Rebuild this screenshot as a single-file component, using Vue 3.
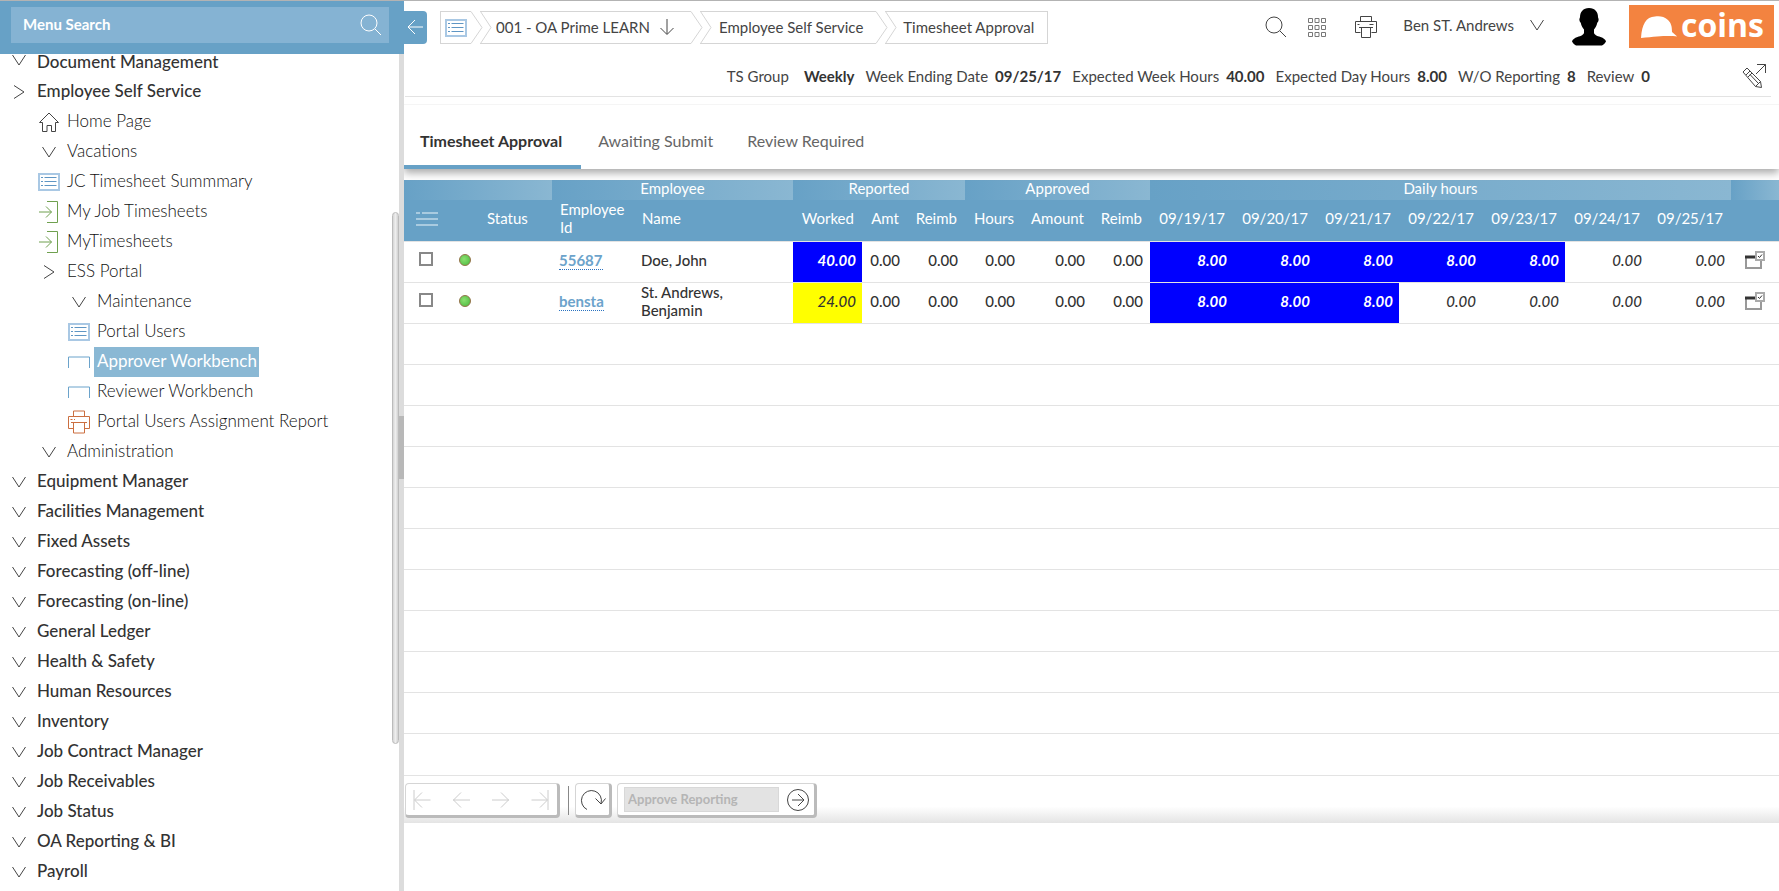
<script setup>
const menu = [
  { label: 'Document Management', level: 0, icon: 'down' },
  { label: 'Employee Self Service', level: 0, icon: 'right' },
  { label: 'Home Page', level: 1, icon: 'home' },
  { label: 'Vacations', level: 1, icon: 'down' },
  { label: 'JC Timesheet Summmary', level: 1, icon: 'list' },
  { label: 'My Job Timesheets', level: 1, icon: 'enter' },
  { label: 'MyTimesheets', level: 1, icon: 'enter' },
  { label: 'ESS Portal', level: 1, icon: 'right' },
  { label: 'Maintenance', level: 2, icon: 'down' },
  { label: 'Portal Users', level: 2, icon: 'list' },
  { label: 'Approver Workbench', level: 2, icon: 'bench', active: true },
  { label: 'Reviewer Workbench', level: 2, icon: 'bench' },
  { label: 'Portal Users Assignment Report', level: 2, icon: 'report' },
  { label: 'Administration', level: 1, icon: 'down' },
  { label: 'Equipment Manager', level: 0, icon: 'down' },
  { label: 'Facilities Management', level: 0, icon: 'down' },
  { label: 'Fixed Assets', level: 0, icon: 'down' },
  { label: 'Forecasting (off-line)', level: 0, icon: 'down' },
  { label: 'Forecasting (on-line)', level: 0, icon: 'down' },
  { label: 'General Ledger', level: 0, icon: 'down' },
  { label: 'Health & Safety', level: 0, icon: 'down' },
  { label: 'Human Resources', level: 0, icon: 'down' },
  { label: 'Inventory', level: 0, icon: 'down' },
  { label: 'Job Contract Manager', level: 0, icon: 'down' },
  { label: 'Job Receivables', level: 0, icon: 'down' },
  { label: 'Job Status', level: 0, icon: 'down' },
  { label: 'OA Reporting & BI', level: 0, icon: 'down' },
  { label: 'Payroll', level: 0, icon: 'down' },
]
const info = [
  ['TS Group', 'Weekly'],
  ['Week Ending Date', '09/25/17'],
  ['Expected Week Hours', '40.00'],
  ['Expected Day Hours', '8.00'],
  ['W/O Reporting', '8'],
  ['Review', '0'],
]
const tabs = ['Timesheet Approval', 'Awaiting Submit', 'Review Required']
const totals = ['Amt', 'Reimb', 'Hours', 'Amount', 'Reimb']
const days = ['09/19/17', '09/20/17', '09/21/17', '09/22/17', '09/23/17', '09/24/17', '09/25/17']
const rows = [
  { id: '55687', name: 'Doe, John', worked: '40.00', tone: 'full', hours: ['8.00', '8.00', '8.00', '8.00', '8.00', '0.00', '0.00'] },
  { id: 'bensta', name: 'St. Andrews, Benjamin', worked: '24.00', tone: 'part', hours: ['8.00', '8.00', '8.00', '0.00', '0.00', '0.00', '0.00'] },
]
</script>

<template>
  <div class="page">
    <aside class="sidebar">
      <div class="search-bar">
        <div class="search-box">
          <input type="text" placeholder="Menu Search" aria-label="Menu Search" />
          <button type="button" aria-label="Search menu">
            <svg width="22" height="22" viewBox="0 0 22 22"><circle cx="9" cy="9" r="8" /><path d="M15 15l6 6" /></svg>
          </button>
        </div>
      </div>
      <div class="menu-wrap">
        <nav class="menu">
          <a v-for="m in menu" :key="m.label" href="#" :class="['item', 'level-' + m.level, { active: m.active }]">
            <span class="item-icon">
              <svg v-if="m.icon === 'down'" width="14" height="12" viewBox="0 0 14 12"><path d="M0.5 1L7 11L13.5 1" /></svg>
              <svg v-else-if="m.icon === 'right'" width="12" height="14" viewBox="0 0 12 14"><path d="M1 0.5L11 7L1 13.5" /></svg>
              <svg v-else-if="m.icon === 'home'" width="20" height="20" viewBox="0 0 20 20"><path d="M0.5 10.5L10 1l9.5 9.5h-3v9h-4v-6h-4.500v6h-4.500v-9z" /></svg>
              <svg v-else-if="m.icon === 'list'" class="list" width="22" height="18" viewBox="0 0 22 18"><path class="frame" d="M1 1h20v16H1z" /><path d="M3 4.500h2m1.500 0h12M3 8.500h2m1.500 0h12M3 12.500h2m1.500 0h12" /></svg>
              <svg v-else-if="m.icon === 'enter'" class="enter" width="20" height="22" viewBox="0 0 20 22"><path d="M8 0.500h10.500v21H8M0 11h12.500M7 5.500l5.500 5.500l-5.500 5.500" /></svg>
              <svg v-else-if="m.icon === 'bench'" class="bench" width="22" height="12" viewBox="0 0 22 12"><path d="M0.500 12V1h21v11" /></svg>
              <svg v-else class="report" width="24" height="24" viewBox="0 0 24 24"><path d="M6.500 6V1h11v5M6 18.500H1.500v-12h21v12H18M6.500 12.500h11v10.500h-11zM4 12.500h16M3.500 9.500h2m1.500 0h1" /></svg>
            </span>
            <span class="item-label">{{ m.label }}</span>
          </a>
        </nav>
        <div class="scroll"><div class="thumb"></div></div>
        <div class="splitter"><div class="grip"></div></div>
      </div>
    </aside>

    <main class="main">
      <header class="topbar">
        <button class="collapse" type="button" aria-label="Collapse menu">
          <svg width="16" height="16" viewBox="0 0 16 16"><path d="M16 8H1M8 1L1 8l7 7" /></svg>
        </button>
        <nav class="crumbs">
          <a href="#" class="crumb crumb-home" aria-label="Menu">
            <svg class="list" width="22" height="18" viewBox="0 0 22 18"><path class="frame" d="M1 1h20v16H1z" /><path d="M3 4.500h2m1.500 0h12M3 8.500h2m1.500 0h12M3 12.500h2m1.500 0h12" /></svg>
            <svg class="tip" width="12" height="33" viewBox="0 0 12 33"><path d="M0 0.500L11 16.500L0 32.500" /></svg>
          </a>
          <a href="#" class="crumb">
            <svg class="notch" width="12" height="33" viewBox="0 0 12 33"><path d="M0.500 0.500L11 16.500L0.500 32.500" /></svg>
            001 - OA Prime LEARN
            <svg class="arrow-down" width="14" height="16" viewBox="0 0 14 16"><path d="M7 0v15M0.500 9L7 15.500L13.500 9" /></svg>
            <svg class="tip" width="12" height="33" viewBox="0 0 12 33"><path d="M0 0.500L11 16.500L0 32.500" /></svg>
          </a>
          <a href="#" class="crumb crumb-mid">
            <svg class="notch" width="12" height="33" viewBox="0 0 12 33"><path d="M0.500 0.500L11 16.500L0.500 32.500" /></svg>
            Employee Self Service
            <svg class="tip" width="12" height="33" viewBox="0 0 12 33"><path d="M0 0.500L11 16.500L0 32.500" /></svg>
          </a>
          <a href="#" class="crumb crumb-last">
            <svg class="notch" width="12" height="33" viewBox="0 0 12 33"><path d="M0.500 0.500L11 16.500L0.500 32.500" /></svg>
            Timesheet Approval
          </a>
        </nav>
        <div class="tools">
          <button type="button" aria-label="Search">
            <svg width="22" height="22" viewBox="0 0 22 22"><circle cx="9" cy="9" r="8" /><path d="M15 15l6 6" /></svg>
          </button>
          <button type="button" class="app-menu" aria-label="Applications">
            <svg class="apps" width="20" height="22" viewBox="0 0 20 22"><path d="M1.500 2.500h4v4h-4zM8 2.500h4v4H8zM14.500 2.500h4v4h-4zM1.500 9.500h4v4h-4zM8 9.500h4v4H8zM14.500 9.500h4v4h-4zM1.500 16.500h4v4h-4zM8 16.500h4v4H8zM14.500 16.500h4v4h-4z" /></svg>
          </button>
          <button type="button" class="print" aria-label="Print">
            <svg width="22" height="22" viewBox="0 0 22 22"><path d="M5.500 5.500v-5h11v5M5.500 16.500h-5v-11h21v11h-5M6.500 11.500h9v10h-9zM4 11.500h14M2.500 8.500h2m10 0h4" /></svg>
          </button>
          <button type="button" class="user">
            Ben ST. Andrews
            <svg width="14" height="12" viewBox="0 0 14 12"><path d="M0.500 1L7 11L13.500 1" /></svg>
          </button>
          <svg class="avatar" width="34" height="38" viewBox="0 0 34 38"><path d="M17 0c6 0 9 4 9 9c0 1 1 1.500 0.500 3.500c-0.300 1.500-1 1.800-1.300 2.500c-0.500 3-2 5-3.200 6.500v3c0 2 3 3.500 6.500 4.500c3 1 5 2.500 5.500 4.500c-1 2-2.500 3-4 4H4c-1.500-1-3-2-4-4c0.500-2 2.500-3.500 5.500-4.500c3.500-1 6.500-2.500 6.500-4.500v-3c-1.200-1.500-2.700-3.500-3.200-6.500c-0.300-0.700-1-1-1.300-2.500C7 10.500 8 10 8 9c0-5 3-9 9-9z" /></svg>
          <div class="logo">
            <svg width="36" height="22" viewBox="0 0 36 22"><path d="M0 22C1 8 5 1 14 0.500C18 0 23 0 27 4C30 7 31 10 31 16C33 18 35 19 36 20.500C31 19.500 20 19.500 0 22z" /></svg>
            <span>coins</span>
          </div>
        </div>
      </header>

      <section class="info">
        <dl>
          <div v-for="[k, v] in info" :key="k"><dt>{{ k }}</dt><dd>{{ v }}</dd></div>
        </dl>
        <button type="button" aria-label="Edit">
          <svg width="25" height="26" viewBox="0 0 25 26"><path d="M15 1.500h8.500V10M23.500 1.500L14 11M1 9L5 5L18.500 18.500L19.500 24.500L13.500 23.500zM4 12L8 8M6 14L10 10M8 11.500L16 20M13.500 23.500l5-5" /></svg>
        </button>
      </section>

      <nav class="tabs">
        <button v-for="(t, i) in tabs" :key="t" type="button" :class="{ selected: i === 0 }">{{ t }}</button>
      </nav>

      <table class="grid">
        <colgroup>
          <col class="c-check" /><col class="c-dot" /><col class="c-status" /><col class="c-id" /><col />
          <col class="c-worked" /><col class="c-amt" /><col class="c-reimb" /><col class="c-hours" /><col class="c-amount" /><col class="c-reimb" />
          <col v-for="d in days" :key="d" class="c-day" /><col class="c-action" />
        </colgroup>
        <thead>
          <tr class="groups">
            <th colspan="3"></th>
            <th colspan="2">Employee</th>
            <th colspan="3">Reported</th>
            <th colspan="3">Approved</th>
            <th colspan="7">Daily hours</th>
            <th></th>
          </tr>
          <tr class="heads">
            <th class="center"><svg width="22" height="14" viewBox="0 0 22 14"><path d="M0 1h4M6 1h16M0 7h22M0 13h22" /></svg></th>
            <th></th>
            <th class="left">Status</th>
            <th class="left">Employee Id</th>
            <th class="left">Name</th>
            <th>Worked</th>
            <th v-for="(t, i) in totals" :key="i">{{ t }}</th>
            <th v-for="d in days" :key="d">{{ d }}</th>
            <th></th>
          </tr>
        </thead>
        <tbody>
          <tr v-for="r in rows" :key="r.id">
            <td class="check"><input type="checkbox" :aria-label="'Select ' + r.name" /></td>
            <td class="center"><span class="dot"></span></td>
            <td></td>
            <td class="left"><a href="#">{{ r.id }}</a></td>
            <td class="name">{{ r.name }}</td>
            <td :class="r.tone">{{ r.worked }}</td>
            <td v-for="(t, i) in totals" :key="i">0.00</td>
            <td v-for="(h, i) in r.hours" :key="'d' + i" :class="h === '8.00' ? 'full' : 'idle'">{{ h }}</td>
            <td class="center">
              <button type="button" class="open" :aria-label="'Open ' + r.name">
                <svg width="20" height="18" viewBox="0 0 20 18"><path class="win" d="M1 5v12h15V5" /><path class="bar" d="M0 6h11" /><path class="win tick-box" d="M11 1h8v8h-8z" /><path class="tick" d="M13 5l1.500 1.500L17 3.500" /></svg>
              </button>
            </td>
          </tr>
          <tr v-for="n in 11" :key="'e' + n" class="empty"><td colspan="19"></td></tr>
        </tbody>
      </table>

      <footer class="toolbar">
        <div class="group pager">
          <button type="button" disabled aria-label="First"><svg width="18" height="20" viewBox="0 0 18 20"><path d="M1 0v20M17.500 10H2M9 2.500L1.500 10L9 17.500" /></svg></button>
          <button type="button" disabled aria-label="Previous"><svg width="18" height="20" viewBox="0 0 18 20"><path d="M18 10H1M9 2.500L1.500 10L9 17.500" /></svg></button>
          <button type="button" disabled aria-label="Next"><svg width="18" height="20" viewBox="0 0 18 20"><path d="M0 10h17M9 2.500L16.500 10L9 17.500" /></svg></button>
          <button type="button" disabled aria-label="Last"><svg width="18" height="20" viewBox="0 0 18 20"><path d="M17 0v20M0.500 10H16M9 2.500L16.500 10L9 17.500" /></svg></button>
        </div>
        <span class="sep"></span>
        <div class="group refresh">
          <button type="button" aria-label="Refresh"><svg width="26" height="22" viewBox="0 0 26 22"><path d="M7 20.500A10 10 0 1 1 21 14.500M15.500 9.500l5.500 5.500l4.500-5.500" /></svg></button>
        </div>
        <div class="group action">
          <input type="text" disabled value="Approve Reporting" aria-label="Action" />
          <button type="button" aria-label="Run action"><svg width="24" height="24" viewBox="0 0 24 24"><circle cx="12" cy="12" r="10.500" /><path d="M6 12h12M12 6l6 6l-6 6" /></svg></button>
        </div>
      </footer>
    </main>
  </div>
</template>

<style>
body {
  background: #fff;
}
</style>

<style scoped>
.page {
  display: flex;
  height: 100vh;
  box-sizing: border-box;
  border-top: 1px solid #b3b3b3;
  overflow: hidden;
  font-family: Lato, "Liberation Sans", sans-serif;
  font-size: 15px;
  color: #333;
}
.page *, .page *::before { box-sizing: border-box; }
a { color: inherit; text-decoration: none; }
button, input {
  font: inherit;
  color: inherit;
  margin: 0;
  padding: 0;
  border: 0;
  background: none;
}
svg { display: block; flex: none; fill: none; stroke: #444; stroke-width: 1; }

.sidebar { display: flex; flex-direction: column; flex: none; width: 404px; }
.search-bar { flex: none; height: 53px; padding: 6px 15px 11px 11px; background: #67a1c6; }
.search-box { display: flex; align-items: center; height: 36px; padding: 0 7px 0 12px; background: #85b3d3; }
.search-box input { flex: 1; min-width: 0; height: 32px; padding-bottom: 2px; font-weight: 700; color: #fff; outline: none; }
.search-box input::placeholder { color: #fff; opacity: 1; }
.search-box svg { stroke: #fff; }

.menu-wrap { display: flex; flex: 1; min-height: 0; }
.menu { flex: 1; overflow: hidden; }
.menu .item:first-child { align-items: flex-start; height: 23px; }
.menu .item:first-child .item-label { line-height: 16px; padding-bottom: 0; }
.item { display: flex; align-items: center; height: 30px; font-size: 17px; font-weight: 300; color: #111; }
.item-icon { display: flex; flex: none; justify-content: center; width: 30px; }
.item-label { line-height: 28px; padding: 0 4px 2px 3px; }
.level-0 { padding-left: 4px; color: #333; font-weight: 500; }
.level-1 { padding-left: 34px; }
.level-2 { padding-left: 64px; }
.active .item-label { padding-right: 2px; background: #8ab8d4; color: #fff; font-weight: 400; }
.list { stroke: #5f96c4; }
.list .frame { stroke: #a9c8e4; stroke-width: 2; }
.enter { stroke: #6fa04f; }
.bench { stroke: #6ba3cb; }
.report { stroke: #cb6f40; }
.scroll { flex: none; width: 7px; padding-top: 158px; }
.thumb { height: 532px; border: 1px solid #bbb; border-radius: 4px; background: linear-gradient(to right, #d5d5d5, #eee, #d0d0d0); }
.splitter { display: flex; flex-direction: column; justify-content: center; flex: none; width: 5px; background: #dcdcdc; }
.grip { height: 63px; margin-bottom: 50px; background: #b8b8b8; }

.main { flex: 1; min-width: 0; }
.topbar { display: flex; align-items: flex-start; height: 54px; color: #444; }
.collapse { display: flex; align-items: center; justify-content: center; flex: none; width: 23px; height: 33px; margin: 10px 13px 0 0; padding: 0 2px 2px 0; border-radius: 0 4px 4px 0; background: #67a1c6; }
.collapse svg { stroke: #fff; }
.crumbs { display: flex; margin-top: 10px; }
.crumb { position: relative; display: flex; align-items: center; height: 33px; margin-right: 9px; padding: 0 0 2px 16px; border: 1px solid #d5d5d5; border-width: 1px 0; white-space: nowrap; }
.crumb-home { width: 31px; padding: 0 0 0 4px; border-left-width: 1px; }
.crumb-mid { padding-right: 13px; padding-left: 19px; }
.crumb-last { padding-left: 18px; padding-right: 13px; border-right-width: 1px; }
.tip, .notch { position: absolute; top: -1px; stroke: #d5d5d5; }
.tip { left: 100%; }
.notch { left: 0; }
.arrow-down { margin: 0 17px 0 10px; }
.tools { display: flex; align-items: center; height: 54px; margin-left: auto; padding: 0 5px 3px 0; }
.tools button { margin-right: 20px; }
.tools .app-menu { margin-right: 28px; }
.tools .print { margin-right: 26px; }
.tools .user { display: flex; align-items: center; gap: 16px; margin-right: 28px; padding-bottom: 3px; }
.apps { stroke: #777; }
.avatar { fill: #000; stroke: none; margin-right: 23px; }
.logo { display: flex; align-items: center; width: 145px; height: 43px; padding-left: 12px; gap: 4px; background: #f38340; color: #fff; }
.logo svg { fill: #fff; stroke: none; }
.logo span { padding-bottom: 3px; font: 700 32px/36px "Open Sans", sans-serif; }

.info { display: flex; align-items: center; justify-content: flex-end; height: 42px; margin: 0 8px 7px 1px; border-bottom: 1px solid #e3e3e3; }
.info dl { display: flex; gap: 11px; margin: 0 92px 0 0; line-height: 20px; }
.info div { display: flex; gap: 7px; }
.info div:first-child { gap: 15px; }
.info dt { color: #444; }
.info dd { margin: 0; font-weight: 700; }
.info button { margin-right: 4px; }

.tabs { display: flex; height: 65px; border-top: 1px solid #f5f5f5; box-shadow: 0 4px 8px #aaa; clip-path: inset(0 0 -12px 0); }
.tabs button { padding: 10px 17px 0; border-bottom: 4px solid transparent; color: #666; font-size: 16px; }
.tabs .selected { padding: 10px 19px 0 16px; border-color: #67a1c6; color: #333; font-weight: 700; }

.grid { width: 100%; margin-top: 11px; table-layout: fixed; border-collapse: collapse; }
.c-check { width: 49px; }
.c-dot { width: 26px; }
.c-status { width: 73px; }
.c-id { width: 82px; }
.c-worked { width: 69px; }
.c-amt { width: 45px; }
.c-reimb { width: 58px; }
.c-hours { width: 57px; }
.c-amount { width: 70px; }
.c-day { width: 83px; }
.c-action { width: 48px; }
th { padding: 0 8px 4px; background: #67a1c6; color: #fff; font-weight: 400; line-height: 18px; text-align: right; }
.groups th { height: 20px; padding: 0 0 4px; line-height: 16px; text-align: center; background: linear-gradient(to right, #67a1c6, #8ab7d2); }
.heads th { height: 41px; }
.heads svg { margin: 0 0 0 4px; stroke: #a9cbe0; stroke-width: 2; }
td { height: 41px; padding: 0 7px 4px; border-top: 1px solid #e3e3e3; line-height: 18px; text-align: right; font-weight: 500; }
.grid .left { text-align: left; }
.grid .center { text-align: center; padding: 0; }
.grid .name { text-align: left; padding-right: 30px; }
.grid .heads .center { padding: 0 8px 3px; }
.full { background: #00f; color: #fff; font-weight: 700; font-style: italic; }
.part { background: #ff0; font-style: italic; }
.idle { font-style: italic; }
td.full, td.part, td.idle { padding-right: 6px; }
td a { color: #6ca3cb; font-weight: 700; border-bottom: 1px dotted #2a72c0; }
.check input { appearance: none; display: block; width: 14px; height: 14px; margin: -2px 0 0 8px; border: 2px solid #888; background: #fff; }
.dot { display: block; width: 12px; height: 12px; margin: -4px 0 0 6px; border: 1px solid #96744c; border-radius: 6px; background: radial-gradient(circle at 40% 40%, #8be070, #46b83c); }
.win { stroke: #999; stroke-width: 2; }
.bar { stroke: #333; stroke-width: 3; }
.tick-box { fill: #fff; stroke: #aaa; }
.tick { stroke: #333; }

.toolbar { display: flex; align-items: center; height: 48px; margin-top: 1px; padding: 2px 0 0 1px; border-top: 1px solid #e3e3e3; background: linear-gradient(#fff 65%, #e4e4e4); }
.group { display: flex; align-items: center; height: 35px; border: 1px solid #d5d5d5; border-width: 1px 3px 3px 1px; border-right-color: #bbb; border-bottom-color: #bbb; border-radius: 4px; background: #fff; }
.pager { width: 155px; padding: 0 8px 0 7px; justify-content: space-between; }
.pager svg { stroke: #ccc; }
.sep { width: 1px; height: 29px; margin: 0 6px 0 8px; background: #888; }
.refresh { width: 37px; justify-content: center; margin-right: 5px; }
.action { width: 200px; padding: 0 4px 0 6px; justify-content: space-between; }
.action input { width: 155px; height: 25px; padding: 0 3px 2px; border: 1px solid #d8d8d8; background: #e3e3e3; color: #b5b5b5; font-size: 13px; font-weight: 700; }
</style>
